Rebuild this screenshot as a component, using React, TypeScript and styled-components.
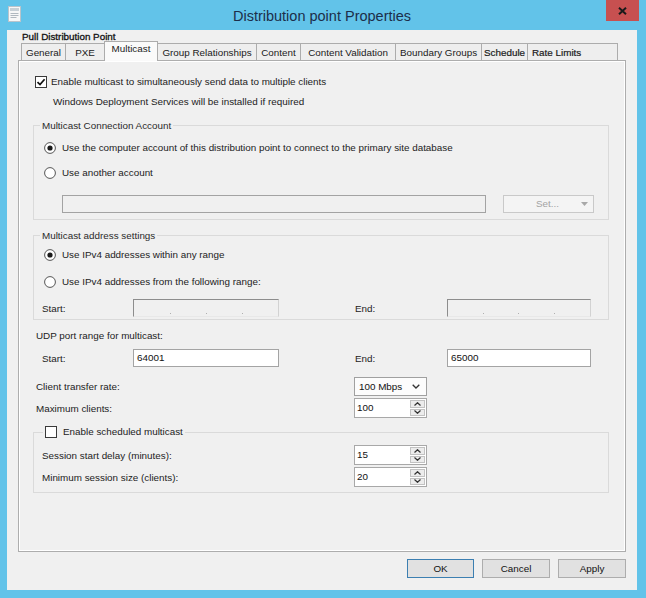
import React from 'react';
import styled, { createGlobalStyle } from 'styled-components';

const GlobalStyle = createGlobalStyle`
  html, body { margin: 0; padding: 0; }
  body {
    background: #62c3e9;
    font-family: "Liberation Sans", Arial, sans-serif;
    font-size: 9.85px;
    color: #222;
  }
  * { box-sizing: border-box; }
`;

const Window = styled.div`
  width: 646px;
  height: 598px;
  background: #62c3e9;
  display: flex;
  flex-direction: column;
  padding: 0 9px 8px 7px;
`;

const TitleBar = styled.div`
  height: 30px;
  display: grid;
  grid-template-columns: 1fr auto 1fr;
  align-items: start;
`;

const TitleIcon = styled.svg`
  margin: 6px 0 0 1px;
`;

const Title = styled.div`
  padding-top: 7px;
  font-size: 14.5px;
  line-height: 18px;
  color: #1c2e4a;
`;

const CloseButton = styled.div`
  justify-self: end;
  width: 33px;
  height: 21px;
  margin-right: -2px;
  background: #c75050;
  display: flex;
  align-items: center;
  justify-content: center;
`;

const Client = styled.div`
  flex: 1;
  background: #f0f0f0;
  display: flex;
  flex-direction: column;
  padding: 1px 11px 12px 11px;
`;

const Header = styled.div`
  height: 12px;
  line-height: 12px;
  padding-left: 4px;
  color: #111;
  -webkit-text-stroke: 0.3px #111;
`;

const TabStrip = styled.div`
  height: 17px;
  display: flex;
  align-items: flex-end;
  padding-left: 3px;
`;

const Tab = styled.div<{ $w: number; $active?: boolean; $strong?: boolean; $clip?: boolean }>`
  position: relative;
  width: ${(p) => p.$w}px;
  height: ${(p) => (p.$active ? 20 : 17)}px;
  margin-right: -1px;
  margin-bottom: ${(p) => (p.$active ? -1 : 0)}px;
  z-index: ${(p) => (p.$active ? 1 : 0)};
  border: 1px solid #acacac;
  border-bottom: none;
  background: ${(p) => (p.$active ? '#fafafa' : '#eeeeee')};
  padding: ${(p) => (p.$active ? 1 : 3)}px ${(p) => (p.$clip ? 0 : 2)}px 0 ${(p) => (p.$clip ? 4 : 2)}px;
  line-height: 12px;
  white-space: nowrap;
  overflow: hidden;
  text-align: ${(p) => (p.$clip ? 'left' : 'center')};
  color: #1a1a1a;
  ${(p) => (p.$strong ? '-webkit-text-stroke: 0.2px #1a1a1a;' : '')}
`;

const Panel = styled.div`
  flex: 1;
  border: 1px solid #adadad;
  box-shadow: inset 0 0 0 1px #ffffff;
  background: #f0f0f0;
  padding: 14px 16px 0 14px;
  display: flex;
  flex-direction: column;
`;

const CheckRow = styled.label`
  height: 14px;
  padding-left: 2px;
  display: flex;
  align-items: center;
  gap: 4px;
  line-height: 14px;
`;

const Note = styled.div`
  height: 14px;
  line-height: 14px;
  margin-top: 6px;
  padding-left: 20px;
`;

const Group = styled.fieldset<{ $mt: number; $pb: number }>`
  margin: ${(p) => p.$mt}px 0 0 0;
  border: 1px solid #dadada;
  padding: 0 14px ${(p) => p.$pb}px 10px;
  min-width: 0;
  display: flex;
  flex-direction: column;
`;

const Legend = styled.legend`
  padding: 0 2px;
  margin-left: -4px;
  line-height: 13px;
  color: #2a2a2a;
`;

const CheckLegend = styled.legend`
  padding: 0 2px;
  margin-left: -1px;
  height: 14px;
  line-height: 14px;
  display: flex;
  align-items: center;
  gap: 6px;
`;

const RadioRow = styled.label<{ $mt: number }>`
  height: 14px;
  margin-top: ${(p) => p.$mt}px;
  display: flex;
  align-items: center;
  gap: 6px;
  line-height: 14px;
`;

const AccountRow = styled.div`
  margin-top: 15px;
  padding-left: 18px;
  display: flex;
  gap: 17px;
`;

const DisabledBox = styled.div`
  width: 424px;
  height: 18px;
  border: 1px solid #a3a3a3;
  background: #f0f0f0;
`;

const SetButton = styled.div`
  width: 91px;
  height: 18px;
  border: 1px solid #c9c9c9;
  background: #f4f4f4;
  color: #a3a3a3;
  display: grid;
  grid-template-columns: 1fr auto;
  align-items: center;
  padding: 0 5px 0 10px;
  line-height: 16px;
`;

const SetLabel = styled.span`
  text-align: center;
`;

const RangeRow = styled.div<{ $mt: number; $ml: number }>`
  margin-top: ${(p) => p.$mt}px;
  margin-left: ${(p) => p.$ml}px;
  display: grid;
  grid-template-columns: 91px 146px 76px 92px 144px;
  align-items: center;
  height: 18px;
`;

const IpBox = styled.div`
  height: 18px;
  border-top: 1px solid #8d8d8d;
  border-left: 1px solid #8d8d8d;
  border-right: 1px solid #d2d2d2;
  border-bottom: 1px solid #e8e8e8;
  background: #f0f0f0;
  display: flex;
  align-items: flex-end;
  justify-content: space-around;
  padding: 0 18px 2px;
`;

const IpDot = styled.span`
  width: 1px;
  height: 1px;
  background: #b0b0b0;
`;

const TextBox = styled.div`
  height: 18px;
  border: 1px solid #a4a4a4;
  background: #ffffff;
  padding-left: 3px;
  line-height: 16px;
  color: #111;
`;

const SectionLabel = styled.div`
  margin-top: 9px;
  height: 14px;
  line-height: 14px;
  padding-left: 3px;
`;

const SettingRow = styled.div<{ $mt: number; $ml: number; $label: number }>`
  margin-top: ${(p) => p.$mt}px;
  margin-left: ${(p) => p.$ml}px;
  display: grid;
  grid-template-columns: ${(p) => p.$label}px 73px;
  align-items: center;
`;

const Select = styled.div`
  height: 19px;
  border: 1px solid #a0a0a0;
  background: #fcfcfc;
  display: flex;
  align-items: center;
  justify-content: space-between;
  padding: 0 6px 0 4px;
  color: #111;
`;

const Spin = styled.div`
  height: 20px;
  border: 1px solid #a8a8a8;
  background: #ffffff;
  display: flex;
  align-items: stretch;
`;

const SpinValue = styled.div`
  flex: 1;
  padding-left: 2px;
  line-height: 18px;
  color: #111;
`;

const SpinButtons = styled.div`
  width: 16px;
  display: flex;
  flex-direction: column;
  gap: 1px;
  padding: 1px 1px 1px 0;
`;

const SpinButton = styled.div`
  flex: 1;
  background: #ececec;
  border: 1px solid #c2c2c2;
  display: flex;
  align-items: center;
  justify-content: center;
`;

const ButtonRow = styled.div`
  margin-top: 7px;
  display: flex;
  justify-content: flex-end;
  gap: 8px;
`;

const DialogButton = styled.div<{ $w: number; $default?: boolean }>`
  width: ${(p) => p.$w}px;
  height: 19px;
  border: 1px solid ${(p) => (p.$default ? '#3c7fb1' : '#adadad')};
  background: #e1e1e1;
  text-align: center;
  line-height: 17px;
  color: #111;
`;

const CheckBox = ({ checked }: { checked?: boolean }) => (
  <svg width="12" height="12" viewBox="0 0 12 12">
    <rect x="0.5" y="0.5" width="11" height="11" fill="#fff" stroke="#3a3a3a" />
    {checked && <path d="M2.5 6.2 L5 8.6 L9.6 3.2" fill="none" stroke="#111" strokeWidth="1.7" />}
  </svg>
);

const Radio = ({ checked }: { checked?: boolean }) => (
  <svg width="12" height="12" viewBox="0 0 12 12">
    <circle cx="6" cy="6" r="5.4" fill="#fff" stroke="#555" />
    {checked && <circle cx="6" cy="6" r="2.6" fill="#1a1a1a" />}
  </svg>
);

const Chevron = ({ up }: { up?: boolean }) => (
  <svg width="7" height="4" viewBox="0 0 7 4">
    <path d={up ? 'M0.5 3.5 L3.5 0.7 L6.5 3.5' : 'M0.5 0.5 L3.5 3.3 L6.5 0.5'} fill="none" stroke="#333" strokeWidth="1.2" />
  </svg>
);

const IpAddress = () => (
  <IpBox>
    <IpDot />
    <IpDot />
    <IpDot />
  </IpBox>
);

const SpinBox = ({ value }: { value: string }) => (
  <Spin>
    <SpinValue>{value}</SpinValue>
    <SpinButtons>
      <SpinButton>
        <Chevron up />
      </SpinButton>
      <SpinButton>
        <Chevron />
      </SpinButton>
    </SpinButtons>
  </Spin>
);

const tabs = [
  { name: 'General', w: 45 },
  { name: 'PXE', w: 40 },
  { name: 'Multicast', w: 54, active: true },
  { name: 'Group Relationships', w: 100 },
  { name: 'Content', w: 45 },
  { name: 'Content Validation', w: 96 },
  { name: 'Boundary Groups', w: 87, clip: true },
  { name: 'Schedule', w: 47, strong: true },
  { name: 'Rate Limits', w: 91, strong: true, clip: true },
];

export default function App() {
  return (
    <>
      <GlobalStyle />
      <Window>
        <TitleBar>
          <TitleIcon width="13" height="16" viewBox="0 0 13 16">
            <rect x="0.5" y="0.5" width="12" height="15" fill="#f7f7f7" stroke="#b9c4cc" />
            <rect x="2" y="2" width="9" height="3" fill="#c7d0d6" />
            <path d="M2.5 7.5 H10.5 M2.5 9.5 H10.5 M2.5 11.5 H8.5" stroke="#b0b8bf" />
          </TitleIcon>
          <Title>Distribution point Properties</Title>
          <CloseButton>
            <svg width="9" height="8" viewBox="0 0 9 8">
              <path d="M1 0.8 L8 7.2 M8 0.8 L1 7.2" stroke="#1a1a1a" strokeWidth="2" />
            </svg>
          </CloseButton>
        </TitleBar>
        <Client>
          <Header>Pull Distribution Point</Header>
          <TabStrip>
            {tabs.map((t) => (
              <Tab key={t.name} $w={t.w} $active={t.active} $strong={t.strong} $clip={t.clip}>
                {t.name}
              </Tab>
            ))}
          </TabStrip>
          <Panel>
            <CheckRow>
              <CheckBox checked />
              Enable multicast to simultaneously send data to multiple clients
            </CheckRow>
            <Note>Windows Deployment Services will be installed if required</Note>

            <Group $mt={10} $pb={6}>
              <Legend>Multicast Connection Account</Legend>
              <RadioRow $mt={9}>
                <Radio checked />
                Use the computer account of this distribution point to connect to the primary site database
              </RadioRow>
              <RadioRow $mt={11}>
                <Radio />
                Use another account
              </RadioRow>
              <AccountRow>
                <DisabledBox />
                <SetButton>
                  <SetLabel>Set...</SetLabel>
                  <svg width="7" height="4" viewBox="0 0 7 4">
                    <path d="M0 0 H7 L3.5 4 Z" fill="#a8a8a8" />
                  </svg>
                </SetButton>
              </AccountRow>
            </Group>

            <Group $mt={9} $pb={2}>
              <Legend>Multicast address settings</Legend>
              <RadioRow $mt={6}>
                <Radio checked />
                Use IPv4 addresses within any range
              </RadioRow>
              <RadioRow $mt={13}>
                <Radio />
                Use IPv4 addresses from the following range:
              </RadioRow>
              <RangeRow $mt={10} $ml={-2}>
                <span>Start:</span>
                <IpAddress />
                <span />
                <span>End:</span>
                <IpAddress />
              </RangeRow>
            </Group>

            <SectionLabel>UDP port range for multicast:</SectionLabel>
            <RangeRow $mt={6} $ml={9}>
              <span>Start:</span>
              <TextBox>64001</TextBox>
              <span />
              <span>End:</span>
              <TextBox>65000</TextBox>
            </RangeRow>

            <SettingRow $mt={10} $ml={3} $label={318}>
              <span>Client transfer rate:</span>
              <Select>
                100 Mbps
                <svg width="8" height="5" viewBox="0 0 8 5">
                  <path d="M0.7 0.7 L4 4 L7.3 0.7" fill="none" stroke="#333" strokeWidth="1.3" />
                </svg>
              </Select>
            </SettingRow>
            <SettingRow $mt={2} $ml={3} $label={318}>
              <span>Maximum clients:</span>
              <SpinBox value="100" />
            </SettingRow>

            <Group $mt={7} $pb={5}>
              <CheckLegend>
                <CheckBox />
                Enable scheduled multicast
              </CheckLegend>
              <SettingRow $mt={6} $ml={-2} $label={312}>
                <span>Session start delay (minutes):</span>
                <SpinBox value="15" />
              </SettingRow>
              <SettingRow $mt={2} $ml={-2} $label={312}>
                <span>Minimum session size (clients):</span>
                <SpinBox value="20" />
              </SettingRow>
            </Group>
          </Panel>
          <ButtonRow>
            <DialogButton $w={67} $default>OK</DialogButton>
            <DialogButton $w={68}>Cancel</DialogButton>
            <DialogButton $w={68}>Apply</DialogButton>
          </ButtonRow>
        </Client>
      </Window>
    </>
  );
}
